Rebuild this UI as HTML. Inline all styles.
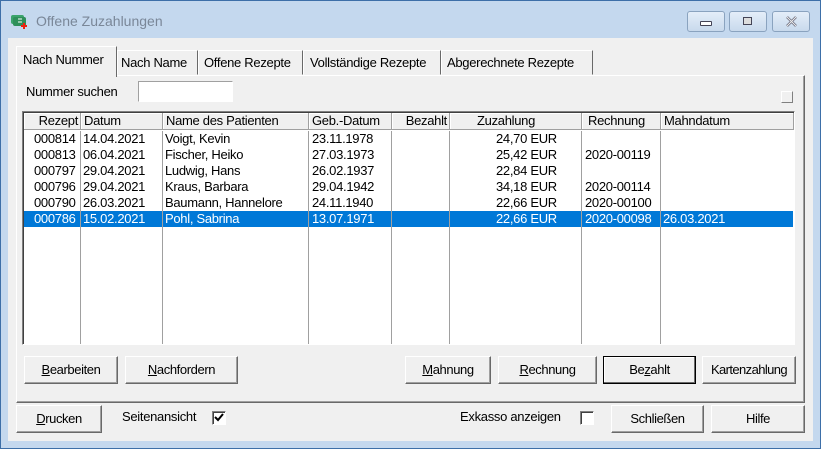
<!DOCTYPE html>
<html><head><meta charset="utf-8"><style>
*{box-sizing:border-box;margin:0;padding:0}
body{width:821px;height:449px;overflow:hidden;background:#3d6fa8;font-family:"Liberation Sans",sans-serif;font-size:13px;color:#000;position:relative}
.frame{position:absolute;left:1px;top:1px;width:819px;height:447px;background:#c4d8ee}
.abs{position:absolute}
.client{position:absolute;left:8px;top:38px;width:805px;height:403px;background:#f0f0f0}
.cap{position:absolute;top:11px;height:21px;border:1px solid #8aa3bf;border-radius:3px;background:linear-gradient(#e4eef9,#c8d9ec)}
.btn{position:absolute;height:28px;background:#f0f0f0;border:1px solid;border-color:#fff #696969 #696969 #fff;box-shadow:inset -1px -1px 0 #a0a0a0;text-align:center;line-height:26px;font-size:13px;letter-spacing:-0.4px}
.t{position:absolute;white-space:nowrap;font-size:13px;letter-spacing:-0.3px}
.hdr{position:absolute;top:1px;height:17px;background:#f0f0f0;border-right:1px solid #a0a0a0;border-bottom:1px solid #a0a0a0;box-shadow:inset 1px 1px 0 #fff;line-height:16px;padding-left:3px;white-space:nowrap;letter-spacing:-0.3px}
.vl{position:absolute;top:19px;bottom:0;width:1px;background:#a0a0a0}
.row{position:absolute;left:1px;right:1px;height:16px;line-height:16px;letter-spacing:-0.3px}
.row span{position:absolute;white-space:nowrap}
.sel{background:#0078d7;color:#fff}
.cb{position:absolute;width:14px;height:14px;background:#fff;border:1px solid;border-color:#808080 #fff #fff #808080;box-shadow:inset 1px 1px 0 #404040}
</style></head><body>
<div class="frame"></div>
<svg class="abs" style="left:10px;top:12px" width="20" height="18"><rect x="1" y="3" width="13" height="9" rx="2" fill="#3aa36b"/><rect x="3" y="5" width="13" height="9" rx="2" fill="#2d8f5a"/><path d="M8 7h4M8 10h4" stroke="#fff"/><path d="M14 11v6M11 14h6" stroke="#e21" stroke-width="2"/></svg>
<div class="t" style="left:36px;top:13px;font-size:14px;color:#7a8798;letter-spacing:0">Offene Zuzahlungen</div>
<div class="cap" style="left:687px;width:38px"><div class="abs" style="left:12px;top:9px;width:12px;height:5px;border:1px solid #445;background:#fff;border-radius:1px"></div></div>
<div class="cap" style="left:729px;width:38px"><div class="abs" style="left:13px;top:5px;width:9px;height:8px;border:1px solid #445;background:#ddd"></div></div>
<div class="cap" style="left:772px;width:38px"><svg class="abs" style="left:12px;top:4px" width="13" height="11"><path d="M2 1l9 9M11 1l-9 9" stroke="#667" stroke-width="2.5"/><path d="M2 1l9 9M11 1l-9 9" stroke="#eee" stroke-width="1"/></svg></div>
<div class="client">
 <div class="abs" style="left:8px;top:37px;width:789px;height:328px;border:1px solid;border-color:#fff #696969 #696969 #fff;box-shadow:inset -1px -1px 0 #a0a0a0"></div>
 <div class="abs" style="left:8px;top:8px;width:101px;height:31px;background:#f0f0f0;border:1px solid;border-color:#fff #696969 transparent #fff;border-bottom:none"></div>
 <div class="t" style="left:15px;top:14px">Nach Nummer</div>
 <div class="abs" style="left:109px;top:12px;width:81px;height:25px;border:1px solid;border-color:#fff #696969 transparent #fff"></div>
 <div class="t" style="left:113px;top:17px">Nach Name</div>
 <div class="abs" style="left:190px;top:12px;width:105px;height:25px;border:1px solid;border-color:#fff #696969 transparent #fff"></div>
 <div class="t" style="left:196px;top:17px">Offene Rezepte</div>
 <div class="abs" style="left:295px;top:12px;width:138px;height:25px;border:1px solid;border-color:#fff #696969 transparent #fff"></div>
 <div class="t" style="left:302px;top:17px">Vollständige Rezepte</div>
 <div class="abs" style="left:433px;top:12px;width:152px;height:25px;border:1px solid;border-color:#fff #696969 transparent #fff"></div>
 <div class="t" style="left:439px;top:17px">Abgerechnete Rezepte</div>
 <div class="t" style="left:18px;top:46px">Nummer suchen</div>
 <div class="abs" style="left:130px;top:43px;width:95px;height:21px;background:#fff;border:1px solid;border-color:#a0a0a0 #fff #fff #a0a0a0"></div>
 <div class="abs" style="left:773px;top:53px;width:12px;height:12px;border:1px solid;border-color:#fff #808080 #808080 #fff;background:#f0f0f0"></div>
 <div class="abs" style="left:14px;top:73px;width:773px;height:234px;background:#fff;border:1px solid;border-color:#808080 #fff #fff #808080;box-shadow:inset 1px 1px 0 #404040">
  <div class="hdr" style="left:1px;width:57px;text-align:right;padding-right:2px">Rezept</div>
  <div class="hdr" style="left:58px;width:82px">Datum</div>
  <div class="hdr" style="left:140px;width:146px">Name des Patienten</div>
  <div class="hdr" style="left:286px;width:83px">Geb.-Datum</div>
  <div class="hdr" style="left:369px;width:58px;text-align:right;padding-right:2px">Bezahlt</div>
  <div class="hdr" style="left:427px;width:132px;padding-left:27px">Zuzahlung</div>
  <div class="hdr" style="left:559px;width:79px;padding-left:6px">Rechnung</div>
  <div class="hdr" style="left:638px;width:133px">Mahndatum</div>
  <div class="vl" style="left:57px"></div><div class="vl" style="left:139px"></div><div class="vl" style="left:285px"></div><div class="vl" style="left:368px"></div><div class="vl" style="left:426px"></div><div class="vl" style="left:558px"></div><div class="vl" style="left:637px"></div>
  <div class="row" style="top:19px"><span style="left:10px">000814</span><span style="left:59px">14.04.2021</span><span style="left:141px">Voigt, Kevin</span><span style="left:288px">23.11.1978</span><span style="left:472px">24,70 EUR</span></div>
  <div class="row" style="top:35px"><span style="left:10px">000813</span><span style="left:59px">06.04.2021</span><span style="left:141px">Fischer, Heiko</span><span style="left:288px">27.03.1973</span><span style="left:472px">25,42 EUR</span><span style="left:561px">2020-00119</span></div>
  <div class="row" style="top:51px"><span style="left:10px">000797</span><span style="left:59px">29.04.2021</span><span style="left:141px">Ludwig, Hans</span><span style="left:288px">26.02.1937</span><span style="left:472px">22,84 EUR</span></div>
  <div class="row" style="top:67px"><span style="left:10px">000796</span><span style="left:59px">29.04.2021</span><span style="left:141px">Kraus, Barbara</span><span style="left:288px">29.04.1942</span><span style="left:472px">34,18 EUR</span><span style="left:561px">2020-00114</span></div>
  <div class="row" style="top:83px"><span style="left:10px">000790</span><span style="left:59px">26.03.2021</span><span style="left:141px">Baumann, Hannelore</span><span style="left:288px">24.11.1940</span><span style="left:472px">22,66 EUR</span><span style="left:561px">2020-00100</span></div>
  <div class="row sel" style="top:99px"><span style="left:10px">000786</span><span style="left:59px">15.02.2021</span><span style="left:141px">Pohl, Sabrina</span><span style="left:288px">13.07.1971</span><span style="left:472px">22,66 EUR</span><span style="left:561px">2020-00098</span><span style="left:639px">26.03.2021</span>
   <i style="position:absolute;left:56px;top:0;width:1px;height:16px;background:#a0a0a0"></i><i style="position:absolute;left:138px;top:0;width:1px;height:16px;background:#a0a0a0"></i><i style="position:absolute;left:284px;top:0;width:1px;height:16px;background:#a0a0a0"></i><i style="position:absolute;left:367px;top:0;width:1px;height:16px;background:#a0a0a0"></i><i style="position:absolute;left:425px;top:0;width:1px;height:16px;background:#a0a0a0"></i><i style="position:absolute;left:557px;top:0;width:1px;height:16px;background:#a0a0a0"></i><i style="position:absolute;left:636px;top:0;width:1px;height:16px;background:#a0a0a0"></i></div>
 </div>
 <div class="btn" style="left:16px;top:318px;width:94px"><u>B</u>earbeiten</div>
 <div class="btn" style="left:117px;top:318px;width:113px"><u>N</u>achfordern</div>
 <div class="btn" style="left:397px;top:318px;width:86px"><u>M</u>ahnung</div>
 <div class="btn" style="left:490px;top:318px;width:99px"><u>R</u>echnung</div>
 <div class="btn" style="left:595px;top:318px;width:93px;border-color:#000;box-shadow:inset -1px -1px 0 #696969,inset 1px 1px 0 #fff">Be<u>z</u>ahlt</div>
 <div class="btn" style="left:694px;top:318px;width:94px;letter-spacing:-0.6px">Kartenzahlung</div>
 <div class="btn" style="left:8px;top:367px;width:86px"><u>D</u>rucken</div>
 <div class="t" style="left:114px;top:371px">Seitenansicht</div>
 <div class="cb" style="left:204px;top:373px"><svg class="abs" style="left:1px;top:1px" width="10" height="10"><path d="M1 4l3 3 5-6" stroke="#000" stroke-width="2" fill="none"/></svg></div>
 <div class="t" style="left:452px;top:371px">Exkasso anzeigen</div>
 <div class="cb" style="left:572px;top:373px"></div>
 <div class="btn" style="left:603px;top:367px;width:93px">Schließen</div>
 <div class="btn" style="left:703px;top:367px;width:94px">Hilfe</div>
</div>
</body></html>
